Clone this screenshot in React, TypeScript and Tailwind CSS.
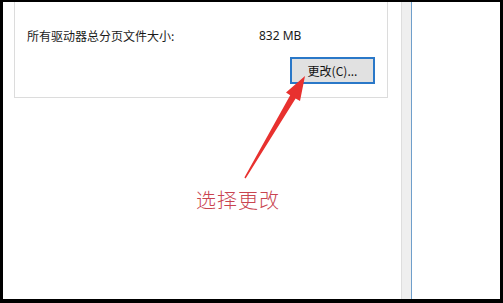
import React from "react";

export default function App() {
  const cjk = { fontFamily: '"Noto Sans CJK SC", "Noto Sans", sans-serif' };
  return (
    <div className="relative w-[503px] h-[303px] bg-black pt-[2px] pl-[3px] pr-[3px] pb-[4px] overflow-hidden">
      <div className="flex h-full w-full bg-white">
        {/* left dialog panel */}
        <div className="w-[398px] h-full pl-[11px] pr-[13px]">
          <div className="h-[96px] border-l border-r border-b border-[#dcdcdc] flex flex-col">
            <div
              className="mt-[26px] flex items-center pl-[12px] text-[12px] leading-[16px] text-[#1a1a1a]"
              style={cjk}
            >
              <span className="w-[232px]">所有驱动器总分页文件大小:</span>
              <span style={{ fontFamily: '"Noto Sans", sans-serif' }}>832 MB</span>
            </div>
            <div className="mt-[13px] flex justify-end pr-[12px]">
              <div
                className="w-[85px] h-[27px] border-2 border-[#2a78c8] bg-[#e1e1e1] flex items-center justify-center text-[12px] text-[#111]"
                style={cjk}
              >
                更改(C)...
              </div>
            </div>
          </div>
        </div>
        {/* scroll strip */}
        <div className="w-[10px] h-full bg-[#efefef] border-l border-[#dedede]" />
        <div className="w-[1px] h-full bg-[#6f9fcb]" />
        <div className="flex-1 h-full bg-white" />
      </div>

      {/* annotation arrow */}
      <svg className="absolute left-0 top-0" width="503" height="303" viewBox="0 0 503 303">
        <polygon
          points="305,76 300,101 295.6,98.4 245.6,178.4 244.4,177.6 290.2,95.2 286,92.6"
          fill="#e8312f"
        />
      </svg>
      <div
        className="absolute left-[196px] top-[186px] text-[20px] leading-[28px] font-light text-[#c94450] tracking-[1px]"
        style={cjk}
      >
        选择更改
      </div>
    </div>
  );
}
